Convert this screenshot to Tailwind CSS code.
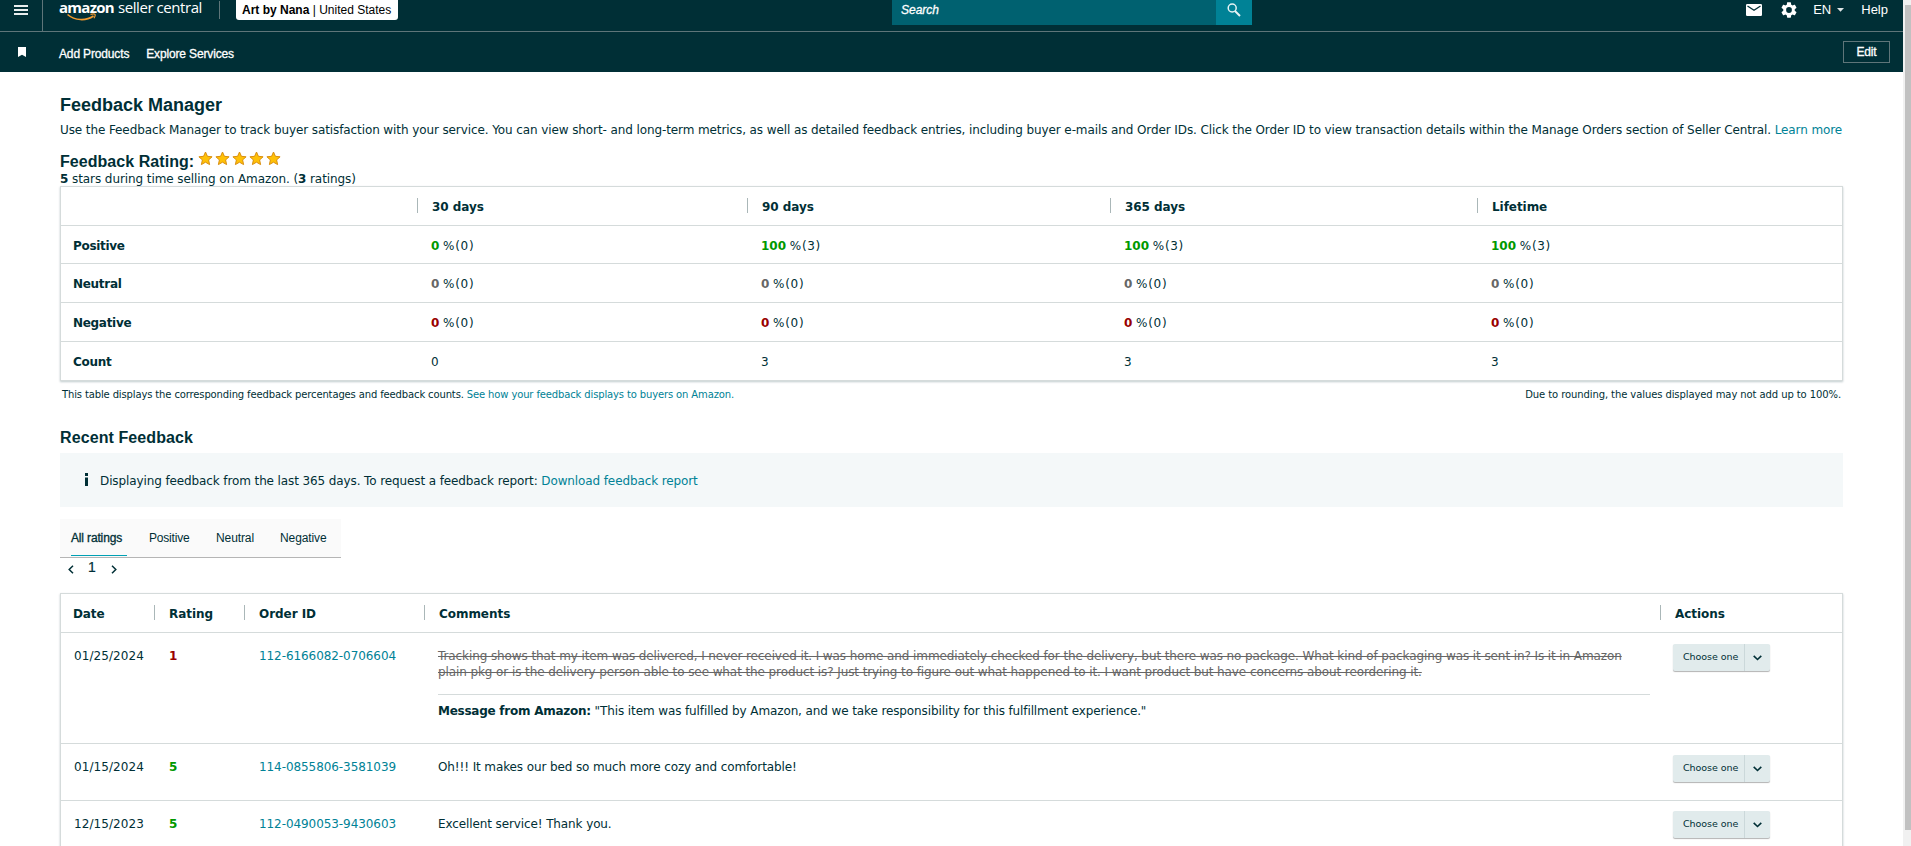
<!DOCTYPE html>
<html lang="en">

<head>
    <meta charset="UTF-8">
    <meta name="viewport" content="width=device-width, initial-scale=1.0">
    <title>Feedback Manager</title>
    <script src="https://cdn.jsdelivr.net/npm/@tailwindcss/browser@4"></script>
</head>

<body class="flex h-screen overflow-hidden bg-white font-['DejaVu_Sans',sans-serif] text-[12px] leading-4 tracking-[-0.11px] text-[#002f36]">
    <div class="flex-1 min-w-0 h-screen overflow-hidden">
        <!-- Top navigation -->
        <header class="bg-[#002f36] text-white font-['Liberation_Sans',sans-serif] tracking-normal">
            <div class="flex h-8 border-b border-[#5e7579]">
                <div class="w-[43px] shrink-0 border-r border-[#5e7579] pl-3.5 pt-[5px]">
                    <svg class="w-3.5 h-2.5" viewBox="0 0 14 10" fill="#e8eeee"><path d="M0 0h14v2H0zM0 4h14v2H0zM0 8h14v2H0z"/></svg>
                </div>
                <div class="relative w-[176px] shrink-0 pl-4 whitespace-nowrap font-['Open_Sans',sans-serif] text-[15px] leading-[14px]">
                    <span class="inline-block w-[55px] font-bold tracking-[-0.72px]">amazon</span><span class="inline-block pl-1 tracking-[-0.43px]">seller central</span>
                    <svg class="absolute left-6 top-[13px] w-[30px] h-2" viewBox="0 0 30 8" fill="none" stroke="#f29a2e"><path d="M.5 1.5C8 7.8 19 8.200 26.500 3" stroke-width="1.600"/><path d="M23.500 1.300c2-.5 4-.6 4.500 0s-.2 2.600-1 4" stroke-width="1.200"/></svg>
                </div>
                <div class="w-px h-[18px] mt-px bg-[#5e7579]"></div>
                <div class="ml-4 w-[162px] h-5 shrink-0 rounded-b-[3px] bg-white text-black pl-1.5 pt-px text-[12px] whitespace-nowrap leading-[18px]"><b>Art by Nana</b> | United States</div>
                <div class="ml-[494px] flex h-[25px]">
                    <div class="w-[324px] bg-[#006170] pl-[9px] pt-px italic leading-[18px] [-webkit-text-stroke:0.3px_white]">Search</div>
                    <div class="w-9 bg-[#008296] pl-[11px] pt-[3px]">
                        <svg class="w-[14px] h-[14px]" viewBox="0 0 14 14" fill="none" stroke="#e6f3f5"><circle cx="5.200" cy="5" r="4" stroke-width="1.500"/><path d="M8 8l5 5" stroke-width="1.900"/></svg>
                    </div>
                </div>
                <div class="ml-auto flex mr-[15px] text-[13px] leading-5">
                    <svg class="w-4 h-3 mt-1" viewBox="0 0 16 12"><rect width="16" height="12" rx="1.200" fill="#fff"/><path d="M1.500 2L8 6.300 14.500 2" fill="none" stroke="#002f36" stroke-width="1.300"/></svg>
                    <svg class="w-4 h-4 ml-[19px] mt-0.5" viewBox="2 2 20 20" fill="#fff"><path d="M19.140 12.940c.04-.3.06-.61.06-.94 0-.32-.02-.64-.07-.94l2.030-1.580a.49.49 0 0 0 .12-.61l-1.920-3.320a.488.488 0 0 0-.59-.22l-2.390.96c-.5-.38-1.030-.7-1.620-.94l-.36-2.540a.484.484 0 0 0-.48-.41h-3.840c-.24 0-.43.17-.47.41l-.36 2.540c-.59.24-1.130.57-1.620.94l-2.390-.96c-.22-.08-.47 0-.59.22L2.740 8.870c-.12.21-.08.47.12.61l2.030 1.580c-.05.3-.09.63-.09.94s.02.64.07.94l-2.030 1.580a.49.49 0 0 0-.12.61l1.920 3.320c.12.22.37.29.59.22l2.390-.96c.5.38 1.030.7 1.620.94l.36 2.540c.05.24.24.41.48.41h3.840c.24 0 .44-.17.47-.41l.36-2.540c.59-.24 1.130-.56 1.620-.94l2.390.96c.22.08.47 0 .59-.22l1.920-3.320c.12-.22.07-.47-.12-.61l-2.010-1.580zM12 15.600A3.600 3.600 0 1 1 12 8.400a3.600 3.600 0 0 1 0 7.200z"/></svg>
                    <span class="ml-4">EN</span>
                    <svg class="w-[7px] h-1 ml-1.5 mt-2" viewBox="0 0 7 4" fill="#dfe6e7"><path d="M0 0h7L3.500 3.800z"/></svg>
                    <span class="ml-[17px]">Help</span>
                </div>
            </div>
            <div class="flex h-10 text-[12px] tracking-[-0.15px] [-webkit-text-stroke:0.3px_white]">
                <svg class="w-2 h-2.5 mt-[15px] ml-[18px]" viewBox="0 0 8 10" fill="#fff"><path d="M0 0h8v10L4 7.800 0 10z"/></svg>
                <span class="ml-[33px] mt-[14px]">Add Products</span>
                <span class="ml-[17px] mt-[14px]">Explore Services</span>
                <div class="ml-auto mr-[13px] mt-[9px] w-[47px] h-[22px] border border-[#5e7579] text-center leading-5">Edit</div>
            </div>
        </header>

        <main class="ml-[60px] w-[1783px]">
            <h1 class="pt-[22px] font-['Liberation_Sans',sans-serif] text-[18px] font-bold leading-[22px] tracking-normal">Feedback Manager</h1>
            <p class="mt-1.5 whitespace-nowrap tracking-[-0.1px]">Use the Feedback Manager to track buyer satisfaction with your service. You can view short- and long-term metrics, as well as detailed feedback entries, including buyer e-mails and Order IDs. Click the Order ID to view transaction details within the Manage Orders section of Seller Central. <a class="text-[#008296]">Learn more</a></p>

            <!-- Overall rating -->
            <div class="flex mt-[13px] h-5">
                <h2 class="font-['Liberation_Sans',sans-serif] text-[16px] font-bold leading-[22px] tracking-[0.05px]">Feedback Rating:</h2>
                <div id="stars" class="flex ml-1 gap-0.5"></div>
            </div>
            <p class="h-[15px] tracking-[-0.08px]"><b>5</b> stars during time selling on Amazon. (<b>3</b> ratings)</p>

            <section id="summary" class="border border-[#d5dbdb] shadow-[0_1px_2px_rgba(0,47,54,0.25)]"></section>
            <div class="flex justify-between px-0.5 pt-[7px] h-[43px] text-[10px] leading-[14px] tracking-[-0.134px]">
                <p>This table displays the corresponding feedback percentages and feedback counts. <a class="text-[#008296]">See how your feedback displays to buyers on Amazon.</a></p>
                <p class="tracking-[-0.09px]">Due to rounding, the values displayed may not add up to 100%.</p>
            </div>

            <h2 class="h-[29px] pt-[3px] font-['Liberation_Sans',sans-serif] text-[16px] font-bold leading-[22px] tracking-[0.1px]">Recent Feedback</h2>
            <div class="flex h-[54px] bg-[#f4f8f9] pt-5 pl-[25px]">
                <svg class="w-[3px] h-[13px]" viewBox="0 0 3 13" fill="#002f36"><path d="M0 0h3v3H0zM0 4.500h3V13H0z"/></svg>
                <p class="ml-3">Displaying feedback from the last 365 days. To request a feedback report: <a class="text-[#008296]">Download feedback report</a></p>
            </div>

            <!-- Rating filter -->
            <nav class="flex mt-3 w-[281px] h-[39px] pl-[11px] bg-[#fafafa] border-b border-[#b5b5b5] font-['Liberation_Sans',sans-serif] tracking-[-0.15px] pt-px">
                <span class="w-14 h-9 leading-[36px] border-b border-[#00a0b4] [-webkit-text-stroke:0.3px_#002f36]">All ratings</span>
                <span class="ml-[22px] w-[67px] leading-[36px] tracking-[-0.2px]">Positive</span>
                <span class="w-16 leading-[36px] tracking-[-0.1px]">Neutral</span>
                <span class="leading-[36px] tracking-[-0.1px]">Negative</span>
            </nav>
            <div class="flex h-[35px] pl-2 pt-px font-['Liberation_Sans',sans-serif] text-[14px]">
                <svg class="w-[6px] h-[9px] mt-[6px]" viewBox="0 0 6 9" fill="none" stroke="#002f36" stroke-width="1.500"><path d="M5 .8L1.200 4.500 5 8.200"/></svg>
                <span class="ml-[14px] w-[23px] [-webkit-text-stroke:0.2px_#002f36]">1</span>
                <svg class="w-[6px] h-[9px] mt-[6px]" viewBox="0 0 6 9" fill="none" stroke="#002f36" stroke-width="1.500"><path d="M1 .8l3.800 3.700L1 8.200"/></svg>
            </div>

            <section id="feedback" class="h-[300px] border border-[#d5dbdb] shadow-[0_1px_2px_rgba(0,47,54,0.25)]"></section>
        </main>
    </div>

    <!-- Scrollbar -->
    <div class="w-2 h-screen shrink-0 bg-[#f1f1f1] pl-0.5 pt-[5px]">
        <div class="h-[825px] bg-[#c1c1c1]"></div>
    </div>

    <script>
        const periods = ['30 days', '90 days', '365 days', 'Lifetime'];

        // Each row: label, colour of the number, height, [percentage, count] per period
        const summary = [
            ['Positive', 'text-[#009900]', 'h-[38px]', [[0, 0], [100, 3], [100, 3], [100, 3]]],
            ['Neutral', 'text-[#666666]', 'h-[39px]', [[0, 0], [0, 0], [0, 0], [0, 0]]],
            ['Negative', 'text-[#990000]', 'h-[39px]', [[0, 0], [0, 0], [0, 0], [0, 0]]]
        ];
        const counts = [0, 3, 3, 3];

        const feedback = [
            {
                date: '01/25/2024', rating: 1, order: '112-6166082-0706604', height: 'h-[111px]', pad: 'pt-[11px]',
                struck: ['Tracking shows that my item was delivered, I never received it. I was home and immediately checked for the delivery, but there was no package. What kind of packaging was it sent in? Is it in Amazon', 'plain pkg or is the delivery person able to see what the product is? Just trying to figure out what happened to it. I want product but have concerns about reordering it.'],
                message: '"This item was fulfilled by Amazon, and we take responsibility for this fulfillment experience."'
            },
            { date: '01/15/2024', rating: 5, order: '114-0855806-3581039', height: 'h-[57px]', pad: 'pt-[11px]', comment: 'Oh!!! It makes our bed so much more cozy and comfortable!' },
            { date: '12/15/2023', rating: 5, order: '112-0490053-9430603', height: 'h-[57px]', pad: 'pt-[10px]', comment: 'Excellent service! Thank you.' }
        ];

        const star = `
            <svg class="w-[15px] h-[15px]" viewBox="0 0 15 15"><path d="M7.500 1l1.900 4.300 4.700.5-3.500 3.100 1 4.700-4.100-2.400-4.100 2.400 1-4.700L.9 5.800l4.700-.5z" fill="#ffc107" stroke="#d98e10" stroke-width="1" stroke-linejoin="round"/></svg>`;

        const headCell = (text) => `
            <div class="flex pt-[11px]">
                <div class="w-px h-[15px] bg-[#aab7b8]"></div>
                <b class="ml-3.5 mt-px tracking-[-0.05px]">${text}</b>
            </div>`;

        const renderSummary = () => `
            <div class="grid grid-cols-[356px_330px_363px_367px_1fr] h-[39px] border-b border-[#d5dbdb]">
                <div></div>
                ${periods.map(headCell).join('')}
            </div>
            ${summary.map(([label, color, height, cells]) => `
                <div class="grid grid-cols-[356px_330px_363px_367px_1fr] ${height} border-b border-[#d5dbdb] pt-3">
                    <b class="pl-3 tracking-[-0.3px]">${label}</b>
                    ${cells.map(([pct, n]) => `<div class="pl-3.5"><b class="${color} tracking-normal">${pct}</b> <span class="tracking-[0.7px]">%(${n})</span></div>`).join('')}
                </div>`).join('')}
            <div class="grid grid-cols-[356px_330px_363px_367px_1fr] h-[38px] pt-3">
                <b class="pl-3 tracking-[-0.3px]">Count</b>
                ${counts.map(n => `<div class="pl-3.5">${n}</div>`).join('')}
            </div>`;

        const renderComment = (row) => row.struck ? `
            <p class="line-through text-[#666666] tracking-[-0.095px] whitespace-nowrap">${row.struck.join('<br>')}</p>
            <div class="mt-[14px] mr-[10px] border-t border-[#d5dbdb] pt-2 tracking-[-0.11px]"><b class="tracking-[-0.25px]">Message from Amazon:</b> ${row.message}</div>`
            : row.comment;

        const renderFeedback = () => `
            <div class="grid grid-cols-[93px_90px_180px_1236px_1fr] h-[39px] border-b border-[#d5dbdb]">
                <b class="pl-3 pt-3 tracking-[-0.1px]">Date</b>
                ${['Rating', 'Order ID', 'Comments', 'Actions'].map(headCell).join('')}
            </div>
            ${feedback.map(row => `
                <div class="grid grid-cols-[93px_90px_180px_1236px_1fr] ${row.height} border-b border-[#d5dbdb]">
                    <div class="pl-[13px] pt-[15px] tracking-[0.08px]">${row.date}</div>
                    <b class="pl-[15px] pt-[15px] ${row.rating > 3 ? 'text-[#009900]' : 'text-[#990000]'}">${row.rating}</b>
                    <a class="pl-[15px] pt-[15px] tracking-[-0.076px] text-[#008296]">${row.order}</a>
                    <div class="pl-3.5 pt-[15px]">${renderComment(row)}</div>
                    <div class="pl-[13px] ${row.pad}">
                        <div class="flex w-[97px] h-[27px] rounded-[2px] bg-[#e1ebec] shadow-[0_1px_1px_rgba(0,0,0,0.3)]">
                            <span class="w-[72px] pl-2.5 text-[9.5px] leading-[25px] tracking-[-0.06px] border-r border-[#cbd8da]">Choose one</span>
                            <svg class="w-[9px] h-[6px] ml-2 mt-[11px]" viewBox="0 0 9 6" fill="none" stroke="#002f36" stroke-width="1.600"><path d="M.7.9l3.800 3.600L8.300.9"/></svg>
                        </div>
                    </div>
                </div>`).join('')}`;

        document.getElementById('stars').innerHTML = star.repeat(5);
        document.getElementById('summary').innerHTML = renderSummary();
        document.getElementById('feedback').innerHTML = renderFeedback();
    </script>
</body>

</html>
